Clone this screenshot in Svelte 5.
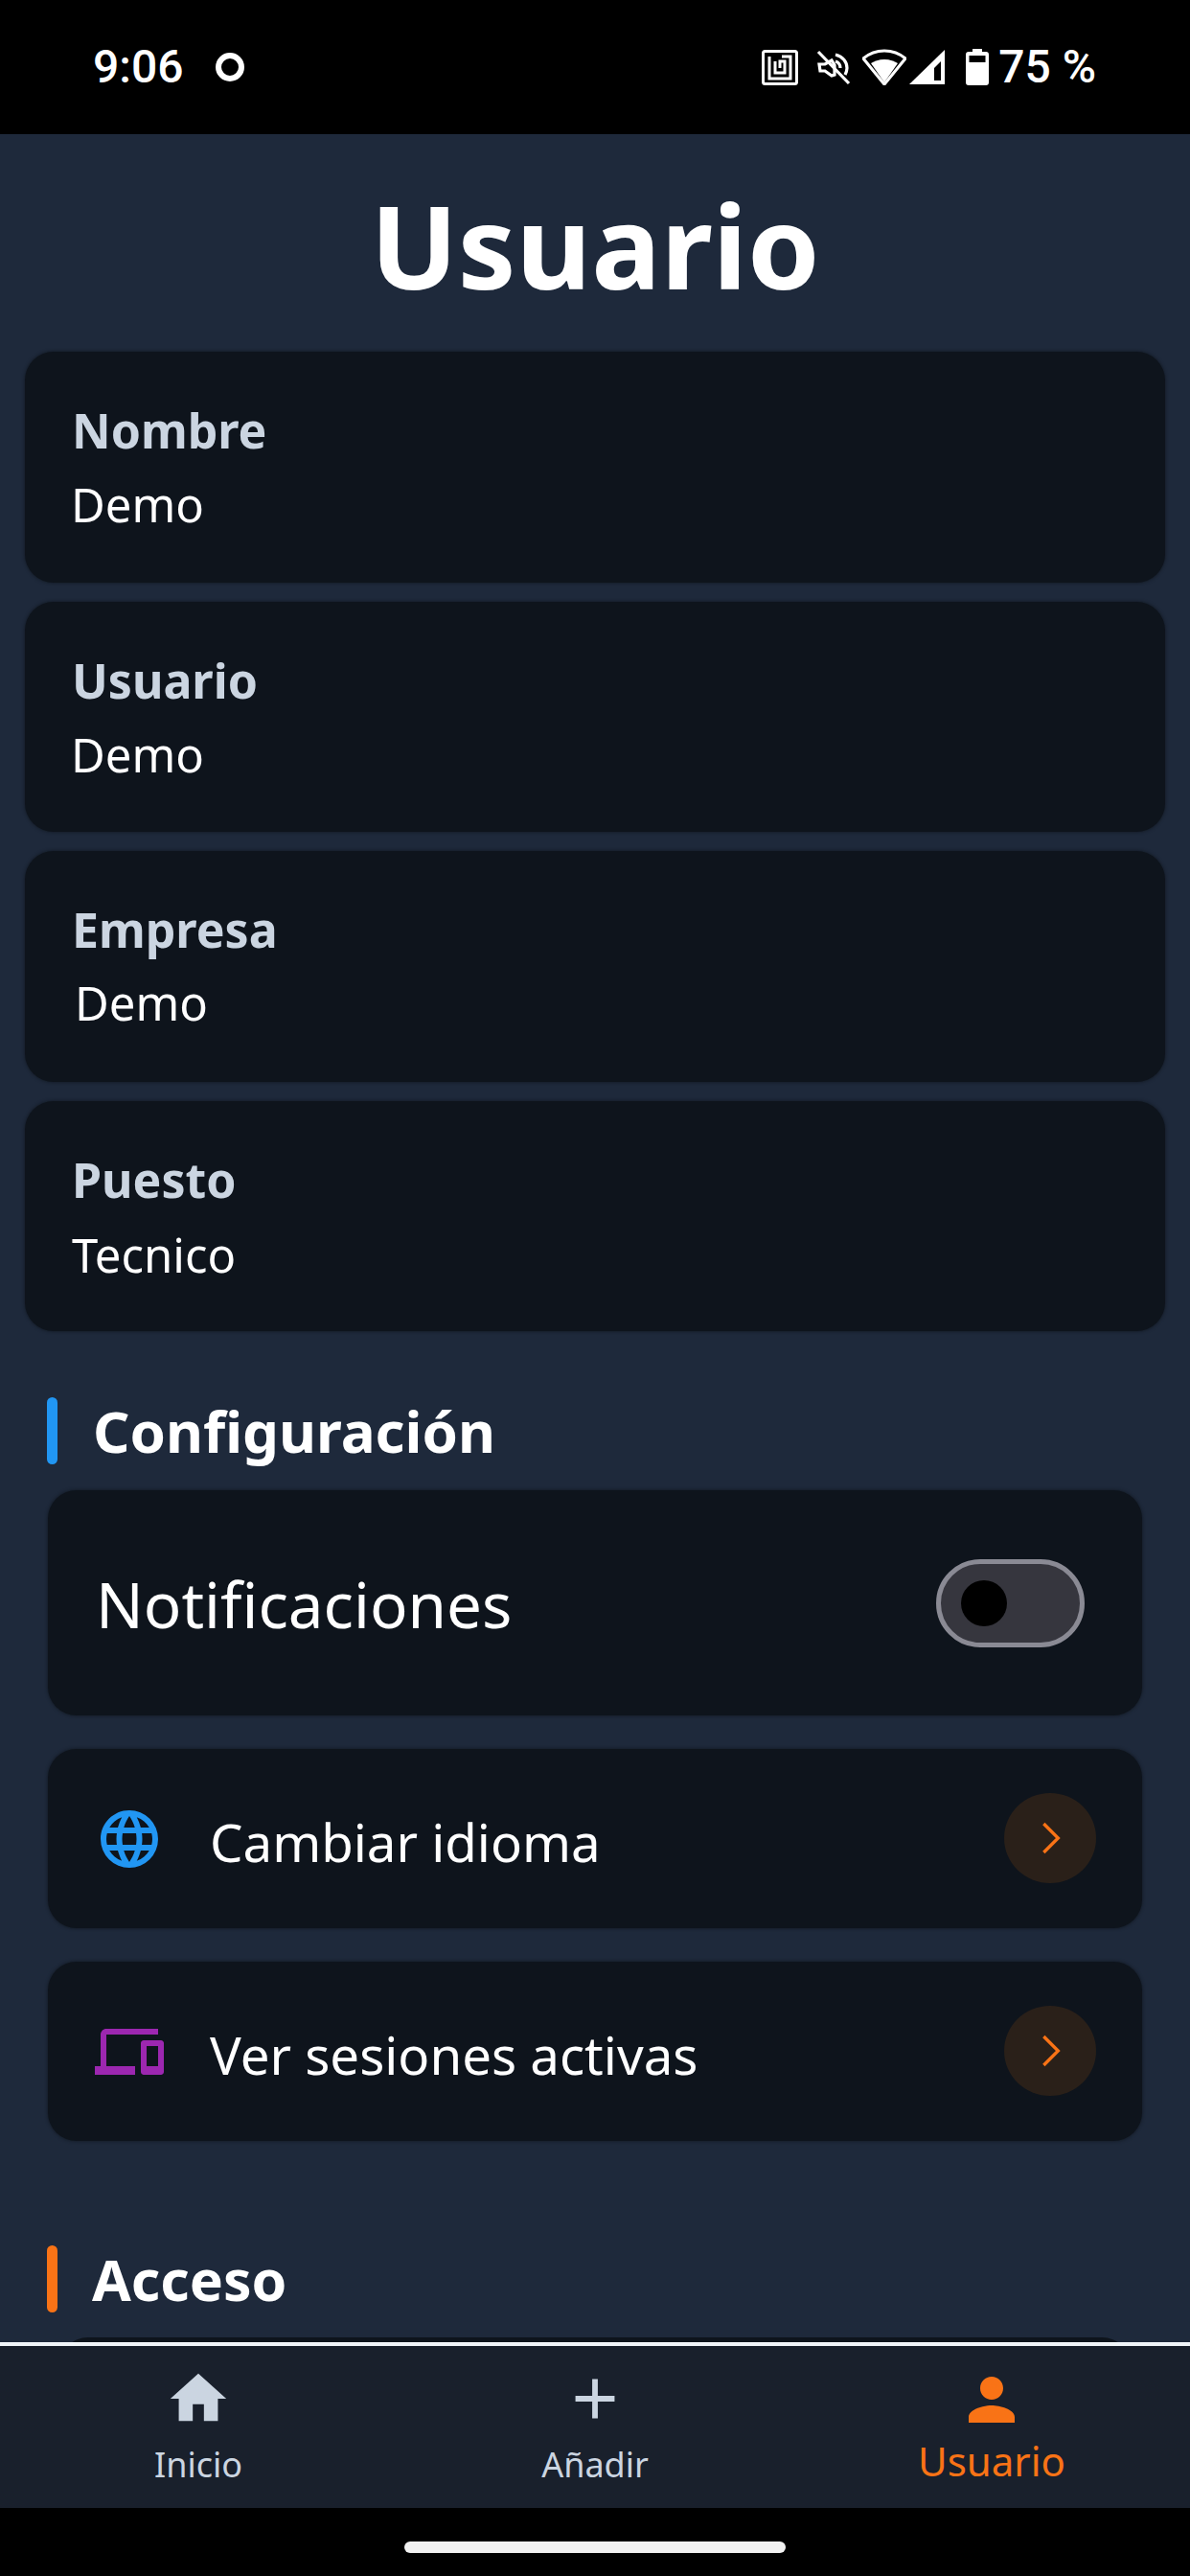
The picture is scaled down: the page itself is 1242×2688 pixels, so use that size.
<script>
  const cards = [
    { label: 'Nombre', value: 'Demo' },
    { label: 'Usuario', value: 'Demo' },
    { label: 'Empresa', value: 'Demo', shift: true },
    { label: 'Puesto', value: 'Tecnico', nudge: true }
  ];
</script>

<div class="screen">
  <header class="status">
    <div class="left">
      <span class="time">9:06</span>
      <span class="ring"></span>
    </div>
    <div class="right">
      <svg class="nfc" viewBox="0 0 38 37" width="38" height="37" fill="none" stroke="#fff" stroke-width="3">
        <rect x="1.5" y="1.5" width="35" height="34" rx="2" />
        <path d="M8 7v23h22V7h-9" />
        <path d="M14 12v12h10V12h-5v7" />
      </svg>
      <svg class="mute" viewBox="0 0 36 38" width="36" height="38" fill="none" stroke="#fff" stroke-width="3.2">
        <path d="M2 3l32 33" />
        <path d="M3 16h6l7-4 3 5v10l-3 1-7-5H4z" />
        <path d="M20 6c8 2 12 8 12 14 0 3-1 5-2 7" />
        <path d="M20 13c3 1 5 4 5 7" />
      </svg>
      <svg class="wifi" viewBox="0 0 46 38" width="46" height="38">
        <path d="M23 2C14 2 7 5 1 10l22 27 22-27C39 5 32 2 23 2z" fill="none" stroke="#fff" stroke-width="3" stroke-linejoin="round" />
        <path d="M23 11c-6 0-10 2-14 4l14 20 14-20c-4-2-8-4-14-4z" fill="#fff" />
      </svg>
      <svg class="signal" viewBox="0 0 38 36" width="38" height="36">
        <path d="M37 0v36H0z" fill="#fff" />
        <path d="M33 12v20h-7V19z" fill="#000" />
      </svg>
      <svg class="battery" viewBox="0 0 24 38" width="24" height="38">
        <path d="M7 0h10v3h4a3 3 0 0 1 3 3v29a3 3 0 0 1-3 3H3a3 3 0 0 1-3-3V6a3 3 0 0 1 3-3h4z" fill="#fff" />
        <rect x="3.5" y="7" width="17" height="7" fill="#000" />
      </svg>
      <span class="pct">75 %</span>
    </div>
  </header>

  <main class="content">
    <h1>Usuario</h1>

    <div class="info-list">
      {#each cards as card}
        <section class="info-card">
          <div class="label">{card.label}</div>
          <div class="value" class:shift={card.shift} class:nudge={card.nudge}>{card.value}</div>
        </section>
      {/each}
    </div>

    <div class="section-head blue">
      <span class="bar"></span>
      <h2>Configuración</h2>
    </div>

    <div class="notif">
      <span class="notif-text">Notificaciones</span>
      <span class="toggle"><span class="thumb"></span></span>
    </div>

    <div class="row first">
      <svg class="row-icon" viewBox="0 0 24 24" width="72" height="72" fill="#2196f3">
        <path d="M16.36,14C16.44,13.34 16.5,12.68 16.5,12C16.5,11.32 16.44,10.66 16.36,10H19.74C19.9,10.64 20,11.31 20,12C20,12.69 19.9,13.36 19.74,14M14.59,19.56C15.19,18.45 15.65,17.25 15.97,16H18.92C17.96,17.65 16.43,18.93 14.59,19.56M14.34,14H9.66C9.56,13.34 9.5,12.68 9.5,12C9.5,11.32 9.56,10.65 9.66,10H14.34C14.43,10.65 14.5,11.32 14.5,12C14.5,12.68 14.43,13.34 14.34,14M12,19.96C11.17,18.76 10.5,17.43 10.09,16H13.91C13.5,17.43 12.83,18.76 12,19.96M8,8H5.08C6.03,6.34 7.57,5.06 9.4,4.44C8.8,5.55 8.35,6.75 8,8M5.08,16H8C8.35,17.25 8.8,18.45 9.4,19.56C7.57,18.93 6.03,17.65 5.08,16M4.26,14C4.1,13.36 4,12.69 4,12C4,11.31 4.1,10.64 4.26,10H7.64C7.56,10.66 7.5,11.32 7.5,12C7.5,12.68 7.56,13.34 7.64,14M12,4.03C12.83,5.23 13.5,6.57 13.91,8H10.09C10.5,6.57 11.17,5.23 12,4.03M18.92,8H15.97C15.65,6.75 15.19,5.55 14.59,4.44C16.43,5.07 17.96,6.34 18.92,8M12,2C6.47,2 2,6.5 2,12A10,10 0 0,0 12,22A10,10 0 0,0 22,12A10,10 0 0,0 12,2Z" />
      </svg>
      <span class="row-text">Cambiar idioma</span>
      <span class="chev">
        <svg viewBox="0 0 24 24" width="40" height="40" fill="none" stroke="#f97316" stroke-width="2"><path d="M8 3l9 9-9 9" /></svg>
      </span>
    </div>

    <div class="row">
      <svg class="row-icon" viewBox="0 0 24 24" width="72" height="72" fill="#9c27b0">
        <path d="M4 6h18V4H4c-1.1 0-2 .9-2 2v11H0v3h14v-3H4V6zm19 2h-6c-.55 0-1 .45-1 1v10c0 .55.45 1 1 1h6c.55 0 1-.45 1-1V9c0-.55-.45-1-1-1zm-1 9h-4v-7h4v7z" />
      </svg>
      <span class="row-text">Ver sesiones activas</span>
      <span class="chev">
        <svg viewBox="0 0 24 24" width="40" height="40" fill="none" stroke="#f97316" stroke-width="2"><path d="M8 3l9 9-9 9" /></svg>
      </span>
    </div>

    <div class="section-head orange">
      <span class="bar"></span>
      <h2>Acceso</h2>
    </div>

    <div class="clipped"></div>
  </main>

  <nav class="tabs">
    <div class="tab">
      <svg viewBox="0 0 24 24" width="70" height="70" fill="#cbd5e1"><path d="M10 20v-6h4v6h5v-8h3L12 3 2 12h3v8z" /></svg>
      <span>Inicio</span>
    </div>
    <div class="tab">
      <svg viewBox="0 0 24 24" width="70" height="70" fill="#cbd5e1"><path d="M19 13h-6v6h-2v-6H5v-2h6V5h2v6h6v2z" /></svg>
      <span>Añadir</span>
    </div>
    <div class="tab active">
      <svg viewBox="0 0 24 24" width="72" height="72" fill="#f97316"><path d="M12 12c2.21 0 4-1.79 4-4s-1.79-4-4-4-4 1.79-4 4 1.79 4 4 4zm0 2c-2.67 0-8 1.34-8 4v2h16v-2c0-2.66-5.33-4-8-4z" /></svg>
      <span>Usuario</span>
    </div>
  </nav>

  <footer class="gesture"><span class="pill"></span></footer>
</div>

<style>
  :global(body) {
    margin: 0;
    background: #000;
  }
  .screen {
    width: 1242px;
    height: 2688px;
    display: flex;
    flex-direction: column;
    overflow: hidden;
    font-family: "Noto Sans", "Open Sans", sans-serif;
    color: #fff;
    background: #000;
  }
  .status {
    height: 140px;
    flex: none;
    display: flex;
    align-items: center;
    justify-content: space-between;
    padding: 0 98px 0 97px;
    box-sizing: border-box;
    font-family: Roboto, sans-serif;
    background: #000;
  }
  .left {
    display: flex;
    align-items: center;
    gap: 33px;
  }
  .time {
    font-size: 48px;
    font-weight: 500;
    line-height: 52px;
  }
  .ring {
    width: 30px;
    height: 30px;
    box-sizing: border-box;
    border: 6px solid #fff;
    border-radius: 50%;
  }
  .right {
    display: flex;
    align-items: center;
  }
  .mute {
    margin-left: 19px;
  }
  .wifi {
    margin-left: 12px;
  }
  .signal {
    margin-left: 3px;
  }
  .battery {
    margin-left: 21px;
  }
  .pct {
    font-size: 48px;
    font-weight: 500;
    line-height: 52px;
    margin-left: 10px;
  }
  .content {
    flex: 1;
    min-height: 0;
    overflow: hidden;
    background: #1e293b;
    display: flex;
    flex-direction: column;
  }
  .content > * {
    flex: none;
  }
  h1 {
    margin: 0;
    height: 227px;
    box-sizing: border-box;
    padding-top: 30px;
    text-align: center;
    font-size: 121px;
    line-height: 170px;
    font-weight: 700;
  }
  .info-list {
    display: flex;
    flex-direction: column;
    gap: 20px;
    padding: 0 26px;
  }
  .info-card {
    height: 240.5px;
    flex: none;
    box-sizing: border-box;
    background: #0e141c;
    box-shadow: 0 0 3px 1px rgba(14, 20, 28, 0.55);
    border-radius: 30px;
    padding: 48px 49px 0;
  }
  .label {
    font-size: 50px;
    line-height: 68px;
    font-weight: 700;
    color: #cbd5e1;
  }
  .value {
    margin-top: 9px;
    font-size: 49px;
    line-height: 68px;
    margin-left: -1px;
  }
  .shift {
    margin-left: 3px;
    margin-top: 8px;
  }
  .nudge {
    margin-left: 0;
    margin-top: 10px;
  }
  .section-head {
    display: flex;
    align-items: center;
    gap: 37px;
    height: 70px;
    padding-left: 49px;
  }
  .blue {
    margin-top: 69px;
  }
  .orange {
    margin-top: 109px;
  }
  .bar {
    width: 11px;
    height: 70px;
    border-radius: 6px;
    flex: none;
  }
  .blue .bar {
    background: #2196f3;
  }
  .orange .bar {
    background: #f97316;
  }
  h2 {
    margin: 0;
    font-size: 60px;
    line-height: 70px;
    font-weight: 700;
  }
  .orange h2 {
    font-size: 59px;
    margin-left: -1px;
  }
  .notif {
    margin: 27px 50px 0;
    height: 235px;
    box-sizing: border-box;
    background: #0e141c;
    box-shadow: 0 0 3px 1px rgba(14, 20, 28, 0.55);
    border-radius: 30px;
    display: flex;
    align-items: center;
    justify-content: space-between;
    padding: 0 60px 0 50px;
  }
  .notif-text {
    font-size: 65.5px;
    padding-top: 2px;
  }
  .toggle {
    width: 155px;
    height: 92px;
    box-sizing: border-box;
    border: 5px solid #8a8a94;
    background: #36363e;
    border-radius: 46px;
    display: flex;
    align-items: center;
    padding-left: 21px;
  }
  .thumb {
    width: 48px;
    height: 48px;
    border-radius: 50%;
    background: #000;
  }
  .row {
    margin: 35px 50px 0;
    height: 187px;
    box-sizing: border-box;
    background: #0e141c;
    box-shadow: 0 0 3px 1px rgba(14, 20, 28, 0.55);
    border-radius: 30px;
    display: flex;
    align-items: center;
    padding: 0 48px 0 49px;
    gap: 48px;
  }
  .row-icon {
    flex: none;
  }
  .row-text {
    flex: 1;
    font-size: 54.6px;
    padding-top: 6px;
  }
  .chev {
    width: 96px;
    height: 94px;
    border-radius: 50%;
    background: #2a2019;
    display: flex;
    align-items: center;
    justify-content: center;
    margin-top: -1px;
  }
  .clipped {
    margin: 26px 62px 0;
    height: 100px;
    background: #0e141c;
    border-radius: 30px;
  }
  .tabs {
    flex: none;
    height: 173px;
    box-sizing: border-box;
    border-top: 4px solid #f1f5f9;
    background: #19202c;
    display: grid;
    grid-template-columns: repeat(3, 1fr);
  }
  .tab {
    display: flex;
    flex-direction: column;
    align-items: center;
    padding-top: 20px;
    color: #cbd5e1;
    font-size: 36px;
    line-height: 46px;
  }
  .tab span {
    margin-top: 11px;
  }
  .active {
    color: #f97316;
    font-size: 42px;
  }
  .active span {
    margin-top: 5px;
  }
  .gesture {
    flex: none;
    height: 71px;
    background: #000;
    display: flex;
    justify-content: center;
    padding-top: 35px;
    box-sizing: border-box;
  }
  .pill {
    width: 398px;
    height: 12px;
    border-radius: 6px;
    background: #f2f2f2;
  }
</style>
